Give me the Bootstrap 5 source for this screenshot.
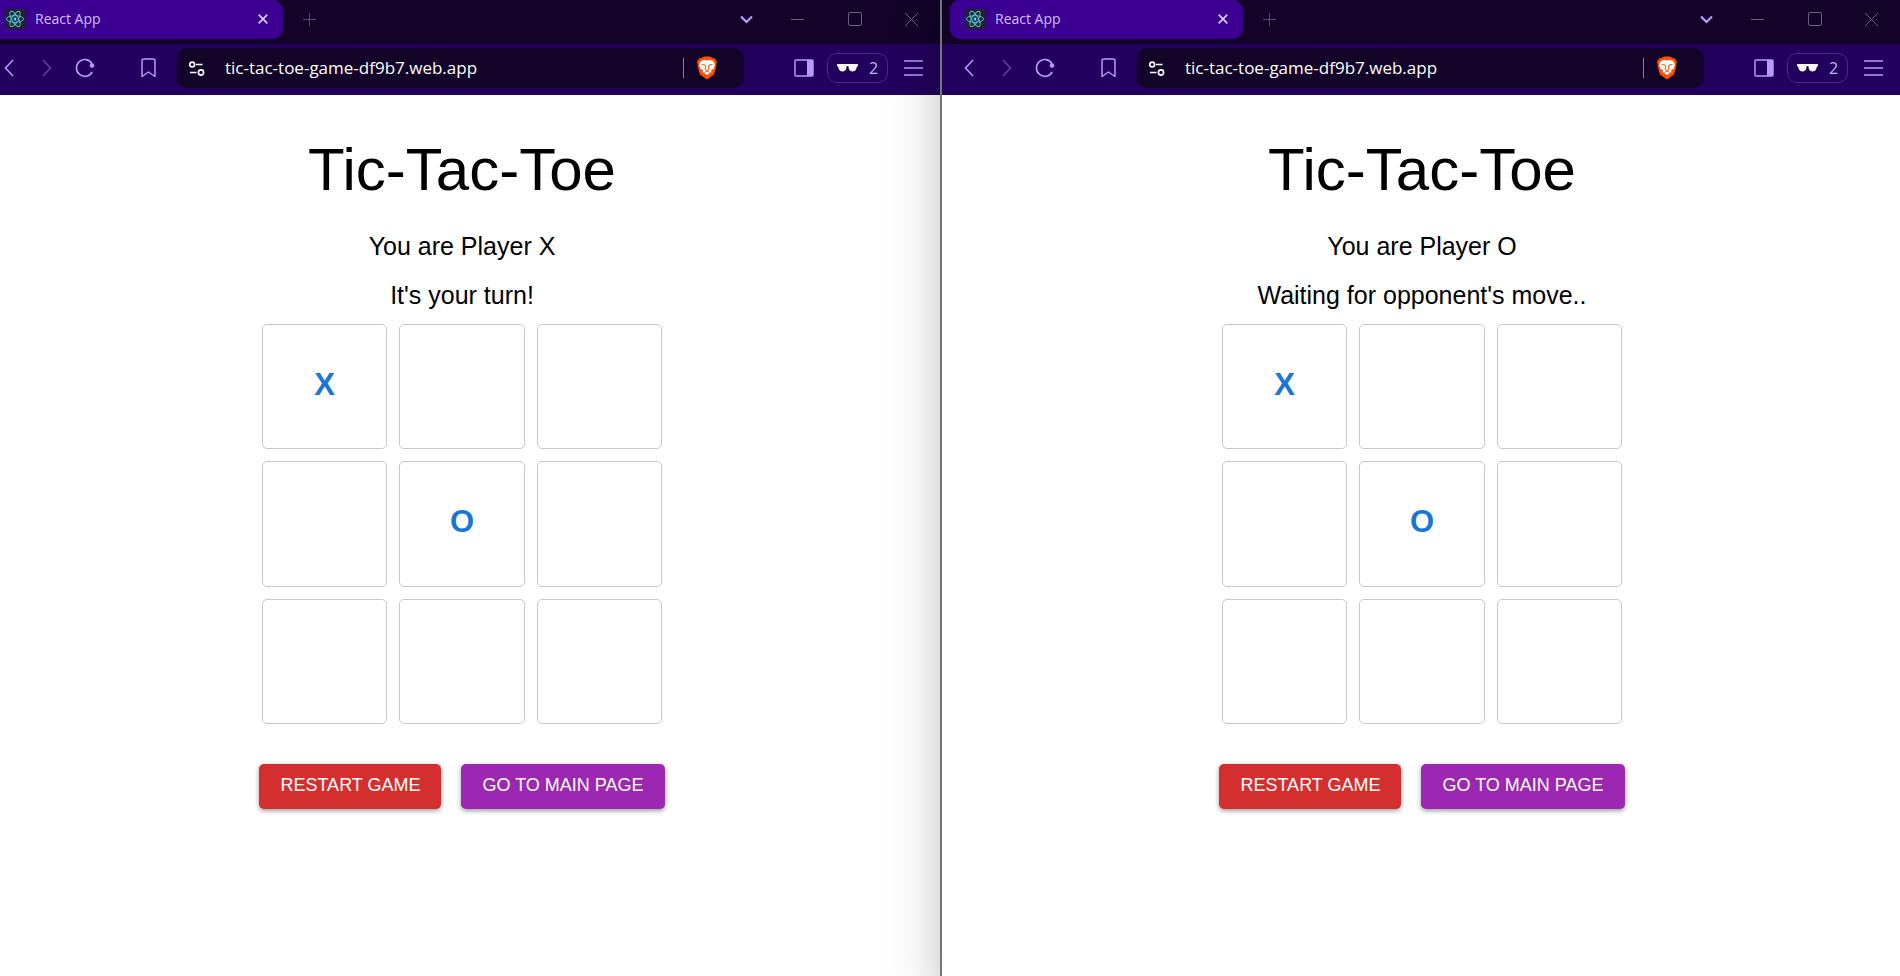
<!DOCTYPE html>
<html lang="en">
<head>
<meta charset="utf-8">
<meta name="viewport" content="width=device-width, initial-scale=1">
<title>Tic-Tac-Toe</title>
<link href="https://cdn.jsdelivr.net/npm/bootstrap@5.3.0/dist/css/bootstrap.min.css" rel="stylesheet">
<style>
  :root { --strip: #130328; --bar: #22005d; --tab: #3b0092; --lilac: #b69aff; --dim: #62409f; }
  body { font-family: "Liberation Sans", Arial, sans-serif; color: #000; background: #fff; overflow: hidden; }
  /* the left window hangs a little over the screen edge */
  .desktop { margin-left: -18px; }
  .win { flex: 1 1 0; min-width: 0; background: #fff; }
  .win-front { box-shadow: 0 24px 48px rgba(0,0,0,.26); border-left: 2px solid #77747a; flex-basis: 2px; z-index: 1; }
  .chrome { font-family: "Open Sans", "Noto Sans", sans-serif; }
  .tabstrip { background: var(--strip); height: 44px; padding-left: 8px; }
  .tabstrip .tool { height: 38px; }
  .app-tab { background: var(--tab); color: #d0bfff; width: 293px; height: 39px; border-radius: 10px; padding: 0 10px 2px 15px; gap: 10px; font-size: 14px; }
  .toolbar { background: var(--bar); height: 51px; padding: 0 8px 3px; }
  .tool { width: 38px; height: 40px; padding: 0; border: 0; background: none; display: flex; align-items: center; justify-content: center; flex: none; color: var(--lilac); }
  .tool.sys { width: 57px; color: #6b6178; }
  .tabstrip .tab-x { width: 20px; height: 20px; color: #d8caff; }
  .dimmed { color: var(--dim); }
  .new-tab { margin-left: 7px; }
  .bookmark { margin: 0 10px 0 25px; }
  .address { background: var(--strip); height: 40px; border-radius: 10px; padding: 0 27px 0 12px; gap: 20px; color: #fff; }
  .address input { background: none; border: 0; outline: 0; color: #fff; padding: 0; min-width: 0; font-size: 17px; }
  .bar-line { width: 1px; height: 20px; background: #86808f; }
  .shield { margin-left: -7px; }
  .panel-btn { margin-left: 41px; }
  .private { width: 61px; height: 30px; margin: 0 6px 0 4px; padding: 0; border: 1px solid #4e2a8c; border-radius: 10px; background: none; color: #c8b5f5; gap: 11px; font-size: 16px; }
  .game { padding: 40px 0 0 2px; }
  .game h1 { font-size: 60px; line-height: 70px; font-weight: 400; margin: 0 0 21px; }
  .game p { font-size: 25px; line-height: 40px; margin: 0 0 9px; }
  .board { display: grid; grid-template-columns: repeat(3, 1fr); gap: 12px; width: 400px; max-width: 100%; margin-bottom: 40px; }
  .square { aspect-ratio: 1; border: 1px solid #c8c8c8; border-radius: 5px; background: #fff; color: #1976d2; font-size: 31px; line-height: 40px; font-weight: 700; padding: 0 0 4px; }
  .actions { gap: 20px; }
  .action { font-size: 18px; line-height: 21px; padding: 11px 21px 13px; border: 0; border-radius: 5px; color: #fff; box-shadow: 0 2px 4px rgba(0,0,0,.3), 0 1px 6px rgba(0,0,0,.12); }
  .restart { background: #d32f2f; }
  .to-main { background: #9c27b0; }
  svg { display: block; fill: none; stroke: currentColor; flex: none; }
</style>
</head>
<body>
<svg width="0" height="0" class="position-absolute" aria-hidden="true">
  <symbol id="react" viewBox="0 0 20 20">
    <rect width="20" height="20" rx="2" fill="#20232a" stroke="none"/>
    <g stroke="#53c1de" stroke-width="1"><ellipse cx="10" cy="10" rx="8.6" ry="3.3"/><ellipse cx="10" cy="10" rx="8.6" ry="3.3" transform="rotate(60 10 10)"/><ellipse cx="10" cy="10" rx="8.6" ry="3.3" transform="rotate(120 10 10)"/></g>
    <circle cx="10" cy="10" r="1.5" fill="#61dafb" stroke="none"/>
  </symbol>
  <symbol id="brave" viewBox="0 0 20 24">
    <path fill="#fb4f08" stroke="none" d="M4.500 2 7 .5h6L15.500 2 18 2.500 20 6l-.8 2.500.3 1.500-2.500 8.500L10 23.500 3 18.500.5 10l.3-1.500L0 6l2-3.500z"/>
    <path fill="#fff" stroke="none" d="M4.500 4.500 8 4l2 .5 2-.5 3.500.5L18 8l-1.500 5-2.500 1 .5 2-4.500 3-4.500-3 .5-2-2.500-1L2 8z"/>
    <path stroke="#fb4f08" stroke-width="1" d="M4.500 8.500 8 9l.7 2L8 13.500l2 1 2-1-.7-2.500.7-2 3.500-.5M7.500 16.500l2.500-1.500 2.500 1.500"/>
  </symbol>
</svg>
<main class="desktop d-flex vh-100">
  <section class="win" aria-label="Player X window">
    <header class="chrome">
      <div class="tabstrip d-flex align-items-start">
        <div class="app-tab d-flex align-items-center">
          <svg width="20" height="20"><use href="#react"/></svg><span class="flex-grow-1">React App</span>
          <button class="tool tab-x" aria-label="Close tab"><svg width="10" height="10" stroke-width="1.700"><path d="M.7.7 9.300 9.300M9.300.7.7 9.300"/></svg></button>
        </div>
        <button class="tool dimmed new-tab" aria-label="New tab"><svg width="13" height="13"><path d="M6.500 0v13M0 6.500h13"/></svg></button>
        <div class="d-flex ms-auto">
          <button class="tool me-1" aria-label="Search tabs"><svg width="13" height="9" stroke-width="2.200"><path d="M1 1.500 6.500 7 12 1.500"/></svg></button>
          <button class="tool sys" aria-label="Minimize"><svg width="13" height="13"><path d="M0 6.500h13"/></svg></button>
          <button class="tool sys" aria-label="Maximize"><svg width="14" height="14"><rect x=".5" y=".5" width="13" height="13" rx="1.500"/></svg></button>
          <button class="tool sys" aria-label="Close"><svg width="13" height="13"><path d="m0 0 13 13M13 0 0 13"/></svg></button>
        </div>
      </div>
      <div class="toolbar d-flex align-items-center">
        <button class="tool" aria-label="Back"><svg width="10" height="18" stroke-width="1.600"><path d="M9 1 1.500 9 9 17"/></svg></button>
        <button class="tool dimmed" aria-label="Forward"><svg width="10" height="18" stroke-width="1.600"><path d="M1 1 8.500 9 1 17"/></svg></button>
        <button class="tool" aria-label="Reload"><svg width="20" height="20" stroke-width="1.600"><path d="M17 5.500A8.400 8.400 0 1 0 17.200 14"/><circle cx="17" cy="7.500" r="2.300" fill="currentColor" stroke="none"/></svg></button>
        <button class="tool bookmark" aria-label="Bookmark"><svg width="15" height="20" stroke-width="1.500" stroke-linejoin="round"><path d="M1 3q0-2 2-2h9q2 0 2 2v15.500l-6.500-4.500L1 18.500z"/></svg></button>
        <div class="address d-flex align-items-center flex-grow-1">
          <svg width="16" height="15" stroke-width="1.600"><circle cx="3.200" cy="3.500" r="2.400"/><path d="M7 3.500h6.500M1 11.500h6.500"/><circle cx="12" cy="11.500" r="2.600"/></svg>
          <input class="flex-grow-1" type="text" aria-label="Address" value="tic-tac-toe-game-df9b7.web.app">
          <span class="bar-line"></span>
          <svg class="shield" width="20" height="24"><use href="#brave"/></svg>
        </div>
        <button class="tool panel-btn" aria-label="Side panel"><svg width="20" height="18" stroke-width="1.500"><rect x="1" y="1" width="18" height="16" rx="1"/><path fill="currentColor" stroke="none" d="M13 1h6v16h-6z"/></svg></button>
        <button class="private d-flex align-items-center justify-content-center"><svg width="21" height="8"><path fill="#fff" stroke="none" d="M0 0h21v2l-1 .5-1 3q-1 2-3.500 2T12 5.500L11.300 2H9.700L9 5.500q-1 2-3.500 2T2 5.500l-1-3L0 2z"/></svg><span>2</span></button>
        <button class="tool" aria-label="Menu"><svg width="19" height="16" stroke-width="1.600"><path d="M0 1h19M0 8h19M0 15h19"/></svg></button>
      </div>
    </header>
    <div class="game d-flex flex-column align-items-center text-center">
      <h1>Tic-Tac-Toe</h1>
      <p>You are Player X</p>
      <p>It's your turn!</p>
      <div class="board">
        <button class="square">X</button><button class="square" aria-label="Empty"></button><button class="square" aria-label="Empty"></button>
        <button class="square" aria-label="Empty"></button><button class="square">O</button><button class="square" aria-label="Empty"></button>
        <button class="square" aria-label="Empty"></button><button class="square" aria-label="Empty"></button><button class="square" aria-label="Empty"></button>
      </div>
      <div class="actions d-flex justify-content-center">
        <button class="action restart">RESTART GAME</button>
        <button class="action to-main">GO TO MAIN PAGE</button>
      </div>
    </div>
  </section>
  <section class="win win-front" aria-label="Player O window">
    <header class="chrome">
      <div class="tabstrip d-flex align-items-start">
        <div class="app-tab d-flex align-items-center">
          <svg width="20" height="20"><use href="#react"/></svg><span class="flex-grow-1">React App</span>
          <button class="tool tab-x" aria-label="Close tab"><svg width="10" height="10" stroke-width="1.700"><path d="M.7.7 9.300 9.300M9.300.7.7 9.300"/></svg></button>
        </div>
        <button class="tool dimmed new-tab" aria-label="New tab"><svg width="13" height="13"><path d="M6.500 0v13M0 6.500h13"/></svg></button>
        <div class="d-flex ms-auto">
          <button class="tool me-1" aria-label="Search tabs"><svg width="13" height="9" stroke-width="2.200"><path d="M1 1.500 6.500 7 12 1.500"/></svg></button>
          <button class="tool sys" aria-label="Minimize"><svg width="13" height="13"><path d="M0 6.500h13"/></svg></button>
          <button class="tool sys" aria-label="Maximize"><svg width="14" height="14"><rect x=".5" y=".5" width="13" height="13" rx="1.500"/></svg></button>
          <button class="tool sys" aria-label="Close"><svg width="13" height="13"><path d="m0 0 13 13M13 0 0 13"/></svg></button>
        </div>
      </div>
      <div class="toolbar d-flex align-items-center">
        <button class="tool" aria-label="Back"><svg width="10" height="18" stroke-width="1.600"><path d="M9 1 1.500 9 9 17"/></svg></button>
        <button class="tool dimmed" aria-label="Forward"><svg width="10" height="18" stroke-width="1.600"><path d="M1 1 8.500 9 1 17"/></svg></button>
        <button class="tool" aria-label="Reload"><svg width="20" height="20" stroke-width="1.600"><path d="M17 5.500A8.400 8.400 0 1 0 17.200 14"/><circle cx="17" cy="7.500" r="2.300" fill="currentColor" stroke="none"/></svg></button>
        <button class="tool bookmark" aria-label="Bookmark"><svg width="15" height="20" stroke-width="1.500" stroke-linejoin="round"><path d="M1 3q0-2 2-2h9q2 0 2 2v15.500l-6.500-4.500L1 18.500z"/></svg></button>
        <div class="address d-flex align-items-center flex-grow-1">
          <svg width="16" height="15" stroke-width="1.600"><circle cx="3.200" cy="3.500" r="2.400"/><path d="M7 3.500h6.500M1 11.500h6.500"/><circle cx="12" cy="11.500" r="2.600"/></svg>
          <input class="flex-grow-1" type="text" aria-label="Address" value="tic-tac-toe-game-df9b7.web.app">
          <span class="bar-line"></span>
          <svg class="shield" width="20" height="24"><use href="#brave"/></svg>
        </div>
        <button class="tool panel-btn" aria-label="Side panel"><svg width="20" height="18" stroke-width="1.500"><rect x="1" y="1" width="18" height="16" rx="1"/><path fill="currentColor" stroke="none" d="M13 1h6v16h-6z"/></svg></button>
        <button class="private d-flex align-items-center justify-content-center"><svg width="21" height="8"><path fill="#fff" stroke="none" d="M0 0h21v2l-1 .5-1 3q-1 2-3.500 2T12 5.500L11.300 2H9.700L9 5.500q-1 2-3.500 2T2 5.500l-1-3L0 2z"/></svg><span>2</span></button>
        <button class="tool" aria-label="Menu"><svg width="19" height="16" stroke-width="1.600"><path d="M0 1h19M0 8h19M0 15h19"/></svg></button>
      </div>
    </header>
    <div class="game d-flex flex-column align-items-center text-center">
      <h1>Tic-Tac-Toe</h1>
      <p>You are Player O</p>
      <p>Waiting for opponent's move..</p>
      <div class="board">
        <button class="square">X</button><button class="square" aria-label="Empty"></button><button class="square" aria-label="Empty"></button>
        <button class="square" aria-label="Empty"></button><button class="square">O</button><button class="square" aria-label="Empty"></button>
        <button class="square" aria-label="Empty"></button><button class="square" aria-label="Empty"></button><button class="square" aria-label="Empty"></button>
      </div>
      <div class="actions d-flex justify-content-center">
        <button class="action restart">RESTART GAME</button>
        <button class="action to-main">GO TO MAIN PAGE</button>
      </div>
    </div>
  </section>
</main>
<script src="https://cdn.jsdelivr.net/npm/bootstrap@5.3.0/dist/js/bootstrap.bundle.min.js"></script>
</body>
</html>
